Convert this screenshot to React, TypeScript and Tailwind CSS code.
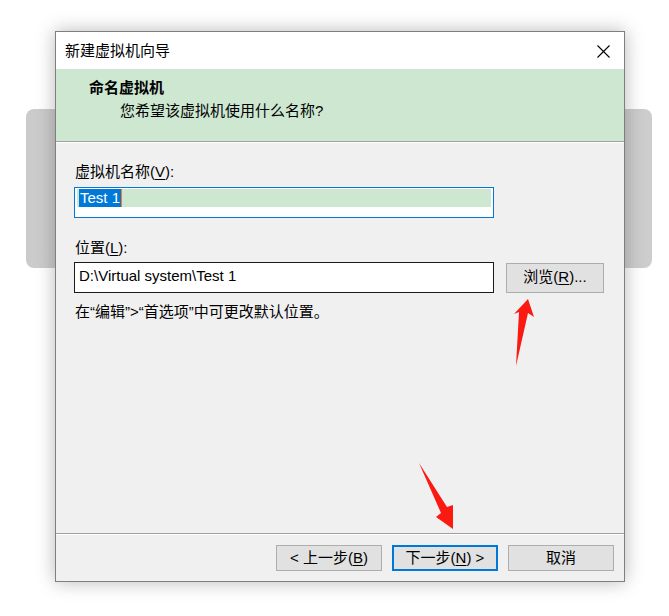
import React from "react";

const font = { fontFamily: '"Liberation Sans", "Noto Sans CJK SC", sans-serif' };

function U({ children }: { children: React.ReactNode }) {
  return <span className="underline underline-offset-[2px]">{children}</span>;
}

export default function App() {
  return (
    <div className="relative w-[669px] h-[616px] bg-white overflow-hidden text-[15px] text-black leading-[20px]" style={font}>
      {/* background window behind dialog */}
      <div className="absolute left-[26px] top-[109px] w-[626px] h-[159px] rounded-[8px] bg-gradient-to-r from-[#cbcbcb] via-[#d3d3d3] to-[#cdcdcd]" />

      {/* dialog */}
      <div className="relative ml-[55px] mt-[31px] w-[570px] h-[551px] border border-[#7f7f7f] bg-[#f0f0f0] flex flex-col shadow-[0_0_18px_rgba(0,0,0,0.28)]">
        {/* title bar */}
        <div className="h-[37px] bg-white flex items-center justify-between pl-[9px] pr-[14px] shrink-0">
          <span>新建虚拟机向导</span>
          <svg width="13" height="13" viewBox="0 0 13 13" className="mt-[1px]">
            <path d="M0.5 0.5 L12.5 12.5 M12.5 0.5 L0.5 12.5" stroke="#000" strokeWidth="1.1" fill="none" />
          </svg>
        </div>

        {/* header */}
        <div className="h-[72px] bg-[#cde7d1] pl-[33px] pt-[9px] shrink-0 flex flex-col">
          <span className="font-bold">命名虚拟机</span>
          <span className="pl-[31px] mt-[3px]">您希望该虚拟机使用什么名称?</span>
        </div>
        <div className="h-px bg-[#a0a0a0] shrink-0" />
        <div className="h-px bg-white shrink-0" />

        {/* body */}
        <div className="flex-1 flex flex-col pl-[18px] pt-[19px]">
          <span className="pl-px">
            虚拟机名称(<U>V</U>):
          </span>
          <div className="mt-[5px] w-[420px] h-[31px] border border-[#0078d7] bg-white pt-px px-[2px]">
            <div className="h-[18px] bg-[#cde7d1] flex items-center pl-[2px]">
              <span className="bg-[#0078d7] text-white h-[18px] leading-[18px] px-[1px]">Test 1</span>
              <span className="w-px h-[18px] bg-[#ff7a1a]" />
            </div>
          </div>

          <span className="pl-px mt-[20px]">
            位置(<U>L</U>):
          </span>
          <div className="mt-[4px] flex items-start gap-[12px]">
            <div className="w-[420px] h-[31px] border border-[#1a1a1a] bg-white flex items-center pl-[4px] pb-[3px]">
              D:\Virtual system\Test 1
            </div>
            <button className="mt-px w-[98px] h-[30px] border border-[#adadad] bg-[#e1e1e1] flex items-center justify-center pb-[2px]">
              浏览(<U>R</U>)...
            </button>
          </div>
          <span className="pl-px mt-[9px]">在“编辑”&gt;“首选项”中可更改默认位置。</span>
        </div>

        <div className="h-px bg-[#a0a0a0] shrink-0" />
        <div className="h-px bg-white shrink-0" />

        {/* footer */}
        <div className="h-[46px] shrink-0 flex justify-end items-start gap-[10px] pr-[10px] pt-[10px]">
          <button className="w-[106px] h-[26px] border border-[#adadad] bg-[#e1e1e1] flex items-center justify-center">
            &lt; 上一步(<U>B</U>)
          </button>
          <button className="w-[106px] h-[26px] border-2 border-[#0078d7] bg-[#e1e1e1] flex items-center justify-center">
            下一步(<U>N</U>) &gt;
          </button>
          <button className="w-[106px] h-[26px] border border-[#adadad] bg-[#e1e1e1] flex items-center justify-center">
            取消
          </button>
        </div>
      </div>

      {/* red annotation arrows */}
      <svg className="absolute left-0 top-0 pointer-events-none" width="669" height="616">
        <polygon points="528,299 534,317 528,313 516,366 519,312 514,314" fill="#fb1a12" />
        <polygon points="419,463 447,507 453,505 453,529 436,517 441,513" fill="#fb1a12" />
      </svg>
    </div>
  );
}
